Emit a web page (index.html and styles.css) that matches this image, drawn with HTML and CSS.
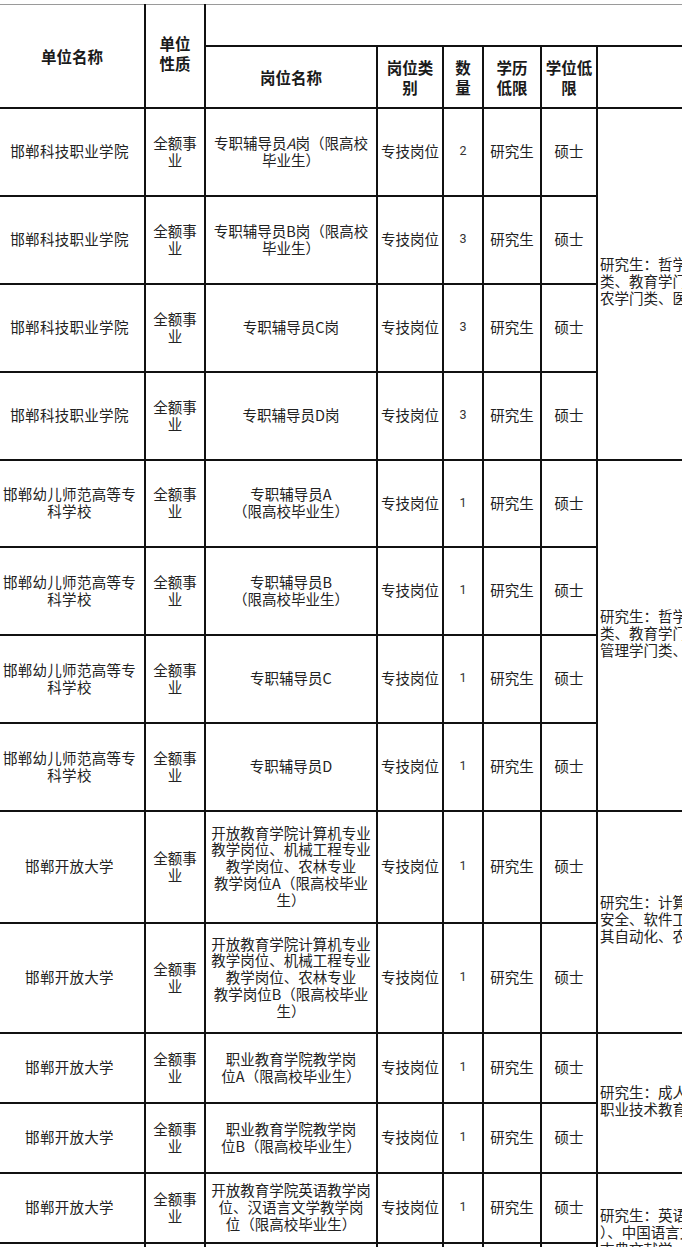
FILE: index.html
```html
<!DOCTYPE html>
<html lang="zh-CN">
<head>
<meta charset="utf-8">
<title>岗位表</title>
<link rel="stylesheet" href="styles.css">
</head>
<body>
<div class="sheet">
<table class="grid">
  <colgroup>
    <col class="c-unit"><col class="c-nature"><col class="c-post"><col class="c-type"><col class="c-num"><col class="c-edu"><col class="c-deg"><col class="c-major">
  </colgroup>
  <thead>
    <tr class="h1">
      <th rowspan="2" class="first">单位名称</th>
      <th rowspan="2" class="nat">单位<br>性质</th>
      <th colspan="6" class="span">&nbsp;</th>
    </tr>
    <tr class="h2">
      <th>岗位名称</th>
      <th>岗位类<br>别</th>
      <th>数<br>量</th>
      <th>学历<br>低限</th>
      <th>学位低<br>限</th>
      <th class="major-h">专业</th>
    </tr>
  </thead>
  <tbody>
    <tr class="r88">
      <td class="first">邯郸科技职业学院</td><td>全额事<br>业</td><td>专职辅导员<i class="it">A</i>岗（限高校<br>毕业生）</td><td>专技岗位</td><td class="num">2</td><td>研究生</td><td>硕士</td>
      <td rowspan="4" class="major">研究生：哲学门类、经济学门类、法学门<br>类、教育学门类、文学门类、理学门类、<br>农学门类、医学门类、管理学门类</td>
    </tr>
    <tr class="r88">
      <td class="first">邯郸科技职业学院</td><td>全额事<br>业</td><td>专职辅导员B岗（限高校<br>毕业生）</td><td>专技岗位</td><td class="num">3</td><td>研究生</td><td>硕士</td>
    </tr>
    <tr class="r88">
      <td class="first">邯郸科技职业学院</td><td>全额事<br>业</td><td>专职辅导员C岗</td><td>专技岗位</td><td class="num">3</td><td>研究生</td><td>硕士</td>
    </tr>
    <tr class="r88">
      <td class="first">邯郸科技职业学院</td><td>全额事<br>业</td><td>专职辅导员D岗</td><td>专技岗位</td><td class="num">3</td><td>研究生</td><td>硕士</td>
    </tr>
    <tr class="r87">
      <td class="first">邯郸幼儿师范高等专<br>科学校</td><td>全额事<br>业</td><td>专职辅导员A<br>（限高校毕业生）</td><td>专技岗位</td><td class="num">1</td><td>研究生</td><td>硕士</td>
      <td rowspan="4" class="major">研究生：哲学门类、经济学门类、法学门<br>类、教育学门类、文学门类、理学门类、<br>管理学门类、艺术学门类</td>
    </tr>
    <tr class="r88">
      <td class="first">邯郸幼儿师范高等专<br>科学校</td><td>全额事<br>业</td><td>专职辅导员B<br>（限高校毕业生）</td><td>专技岗位</td><td class="num">1</td><td>研究生</td><td>硕士</td>
    </tr>
    <tr class="r88">
      <td class="first">邯郸幼儿师范高等专<br>科学校</td><td>全额事<br>业</td><td>专职辅导员C</td><td>专技岗位</td><td class="num">1</td><td>研究生</td><td>硕士</td>
    </tr>
    <tr class="r88">
      <td class="first">邯郸幼儿师范高等专<br>科学校</td><td>全额事<br>业</td><td>专职辅导员D</td><td>专技岗位</td><td class="num">1</td><td>研究生</td><td>硕士</td>
    </tr>
    <tr class="r112">
      <td class="first">邯郸开放大学</td><td>全额事<br>业</td><td>开放教育学院计算机专业<br>教学岗位、机械工程专业<br>教学岗位、农林专业<br>教学岗位A（限高校毕业<br>生）</td><td>专技岗位</td><td class="num">1</td><td>研究生</td><td>硕士</td>
      <td rowspan="2" class="major">研究生：计算机科学与技术、网络空间<br>安全、软件工程、机械工程、电气工程及<br>其自动化、农业工程、林学</td>
    </tr>
    <tr class="r110">
      <td class="first">邯郸开放大学</td><td>全额事<br>业</td><td>开放教育学院计算机专业<br>教学岗位、机械工程专业<br>教学岗位、农林专业<br>教学岗位B（限高校毕业<br>生）</td><td>专技岗位</td><td class="num">1</td><td>研究生</td><td>硕士</td>
    </tr>
    <tr class="r70">
      <td class="first">邯郸开放大学</td><td>全额事<br>业</td><td>职业教育学院教学岗<br>位A（限高校毕业生）</td><td>专技岗位</td><td class="num">1</td><td>研究生</td><td>硕士</td>
      <td rowspan="2" class="major">研究生：成人教育学、<br>职业技术教育学</td>
    </tr>
    <tr class="r70">
      <td class="first">邯郸开放大学</td><td>全额事<br>业</td><td>职业教育学院教学岗<br>位B（限高校毕业生）</td><td>专技岗位</td><td class="num">1</td><td>研究生</td><td>硕士</td>
    </tr>
    <tr class="r70">
      <td class="first">邯郸开放大学</td><td>全额事<br>业</td><td>开放教育学院英语教学岗<br>位、汉语言文学教学岗<br>位（限高校毕业生）</td><td>专技岗位</td><td class="num">1</td><td>研究生</td><td>硕士</td>
      <td rowspan="2" class="major">研究生：英语语言文学（英语笔译、口译<br>）、中国语言文学、汉语国际教育、中国<br>古典文献学、语言学及应用语言学<br>&nbsp;</td>
    </tr>
    <tr class="r70">
      <td class="first">邯郸开放大学</td><td>全额事<br>业</td><td>开放教育学院教学岗位<br>（限高校毕业生）</td><td>专技岗位</td><td class="num">1</td><td>研究生</td><td>硕士</td>
    </tr>
  </tbody>
</table>
</div>
</body>
</html>
```

FILE: styles.css
```css
html, body {
  margin: 0;
  padding: 0;
  background: #ffffff;
  overflow: hidden;
}

.sheet {
  padding-top: 4px;
  width: 682px;
  overflow: hidden;
}

.grid {
  border-collapse: collapse;
  table-layout: fixed;
  width: 897px;
  border-top: 1px solid #9a9a9a;
  font-family: "Noto Sans CJK SC", "Noto Sans", sans-serif;
  color: #222222;
}

.c-unit { width: 145px; }
.c-nature { width: 60px; }
.c-post { width: 172px; }
.c-type { width: 66px; }
.c-num { width: 40px; }
.c-edu { width: 58px; }
.c-deg { width: 56px; }
.c-major { width: 300px; }

.grid th,
.grid td {
  border: 2px solid #111111;
  padding: 0 2px;
  text-align: center;
  vertical-align: middle;
  overflow: hidden;
}

.grid th {
  font-size: 15.5px;
  font-weight: 700;
  line-height: 20px;
  color: #1a1a1a;
}

.grid .h1 th {
  border-top-style: none;
}

.grid td {
  font-size: 14.5px;
  line-height: 16.8px;
  font-weight: 400;
}

.grid td.first {
  border-left-style: none;
  padding: 0 5px 0 0;
  letter-spacing: 0.3px;
}

.grid th.first {
  border-left-style: none;
}

.h1 { height: 41px; }
.h2 { height: 62px; }
.r88 { height: 88px; }
.r87 { height: 87px; }
.r112 { height: 112px; }
.r110 { height: 110px; }
.r70 { height: 70px; }

.grid .nat {
  padding-bottom: 6px;
}

.grid td.num {
  font-family: Roboto, "Noto Sans", sans-serif;
  font-size: 12.5px;
  color: #333333;
}

.it {
  font-style: italic;
}

.grid td.major {
  text-align: left;
  white-space: nowrap;
  line-height: 17px;
  padding-bottom: 6px;
}

.grid .major-h {
  text-align: center;
}
```
